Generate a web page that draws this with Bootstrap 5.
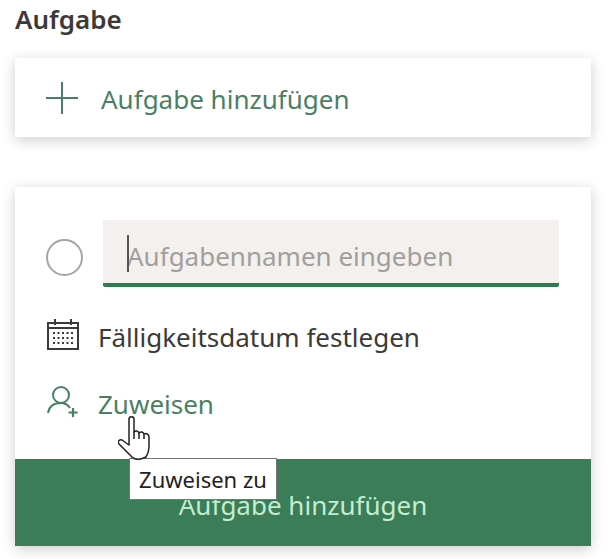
<!DOCTYPE html>
<html lang="de">
<head>
  <meta charset="UTF-8">
  <meta name="viewport" content="width=device-width, initial-scale=1.0">
  <title>Aufgabe</title>
  <link href="https://cdn.jsdelivr.net/npm/bootstrap@5.3.0/dist/css/bootstrap.min.css" rel="stylesheet">
  <style>
    body {
      font-family: "Noto Sans", "Open Sans", sans-serif;
      background-color: #fff;
      color: #323130;
      overflow: hidden;
      height: 559px;
      padding: 0 22px 0 15px;
    }
    .task-heading {
      font-size: 26px;
      font-weight: 600;
      line-height: 33px;
      padding-top: 3px;
      height: 58px;
      margin: 0;
      color: #3b3a39;
    }
    .task-card {
      background: #fff;
      box-shadow: 0 3px 14px rgba(0, 0, 0, 0.2);
      border-radius: 1px;
    }
    .add-row {
      height: 79px;
      padding-left: 31px;
      color: #4a7f64;
      font-size: 26px;
      gap: 23px;
    }
    .add-label { padding-top: 4px; }
    .form-card {
      margin-top: 50px;
      height: 359px;
      position: relative;
    }
    .form-body {
      height: 272px;
      padding: 33px 32px 0 31px;
    }
    .status-ring {
      width: 37px;
      height: 37px;
      border: 2px solid #a5a5a5;
      border-radius: 50%;
      flex-shrink: 0;
      margin-top: 8px;
    }
    .name-field {
      width: 456px;
      height: 67px;
      background: #f3f0ee;
      border-bottom: 4px solid #2e7b52;
      border-radius: 2px;
      color: #a19f9d;
      font-size: 26px;
      padding-left: 24px;
      padding-top: 10px;
      position: relative;
      margin-left: 20px;
    }
    .text-caret {
      position: absolute;
      left: 24px;
      top: 15px;
      width: 2px;
      height: 37px;
      background: #555;
    }
    .meta-row {
      font-size: 26px;
      gap: 18px;
      line-height: 34px;
      height: 34px;
    }
    .meta-date { margin-top: 33px; color: #3b3a39; }
    .meta-assign { margin-top: 33px; color: #4a7f64; }
    .icon-slot {
      width: 34px;
      height: 32px;
      flex-shrink: 0;
      align-self: flex-start;
    }
    .icon-slot svg { display: block; }
    .meta-date .icon-slot { margin-top: -1px; margin-left: 1px; margin-right: -1px; }
    .meta-assign .icon-slot { margin-top: -1px; margin-left: 1px; margin-right: -1px; }
    .submit-bar {
      height: 87px;
      background: #3a7d56;
      color: #c4ecd2;
      font-size: 26px;
      padding-top: 6px;
    }
    .assign-tip {
      position: absolute;
      left: 114px;
      top: 271px;
      height: 42px;
      width: 148px;
      background: #fff;
      border: 1px solid #767676;
      color: #222;
      font-size: 22px;
      z-index: 3;
    }
    .hand-cursor {
      position: absolute;
      left: 103px;
      top: 229px;
      z-index: 4;
    }
  </style>
</head>
<body>
  <h1 class="task-heading">Aufgabe</h1>

  <div class="task-card add-row d-flex align-items-center">
    <svg width="32" height="32" viewBox="0 0 32 32" fill="none" stroke="#4a7f64" stroke-width="2">
      <path d="M16 0v32M0 16h32"/>
    </svg>
    <span class="add-label">Aufgabe hinzufügen</span>
  </div>

  <div class="task-card form-card d-flex flex-column">
    <div class="form-body">
      <div class="d-flex align-items-center">
        <div class="status-ring"></div>
        <div class="name-field d-flex align-items-center"><span class="text-caret"></span>Aufgabennamen eingeben</div>
      </div>
      <div class="meta-row meta-date d-flex align-items-center">
        <span class="icon-slot">
          <svg width="33" height="32" viewBox="0 0 33 32" fill="none" stroke="#3b3a39" stroke-width="2">
            <rect x="1" y="4" width="30" height="26"/>
            <path d="M1 9h30"/>
            <path d="M8 0v6M24 0v6"/>
            <path d="M6 14h20M6 19h20M6 24h20" stroke-dasharray="2 2.500"/>
          </svg>
        </span>
        <span>Fälligkeitsdatum festlegen</span>
      </div>
      <div class="meta-row meta-assign d-flex align-items-center">
        <span class="icon-slot">
          <svg width="32" height="32" viewBox="0 0 32 32" fill="none" stroke="#4a7f64" stroke-width="2">
            <circle cx="14" cy="9" r="8"/>
            <path d="M1 27c1-6 5-10 13-10 4 0 7 2 9 5"/>
            <path d="M26 22v9M21.500 26.500h9" stroke-width="2.200"/>
          </svg>
        </span>
        <span>Zuweisen</span>
      </div>
    </div>
    <div class="submit-bar d-flex align-items-center justify-content-center">Aufgabe hinzufügen</div>

    <svg class="hand-cursor" width="38" height="44" viewBox="0 0 38 44" fill="#fff" stroke="#222" stroke-width="1.500" stroke-linejoin="round">
      <path d="M11 3c0-3 5-3 5 0v13c2-2 4-1 5 1 2-2 4-1 5 1 2-1 5 0 5 3v10c0 5-1 7-3 10-6 3-11 3-14 0L1 28c-2-3 1-5 3-4l7 5z"/>
      <path d="M16 16v7M21 17v6M26 18v5" fill="none"/>
    </svg>
    <div class="assign-tip d-flex align-items-center justify-content-center">Zuweisen zu</div>
  </div>
</body>
</html>
